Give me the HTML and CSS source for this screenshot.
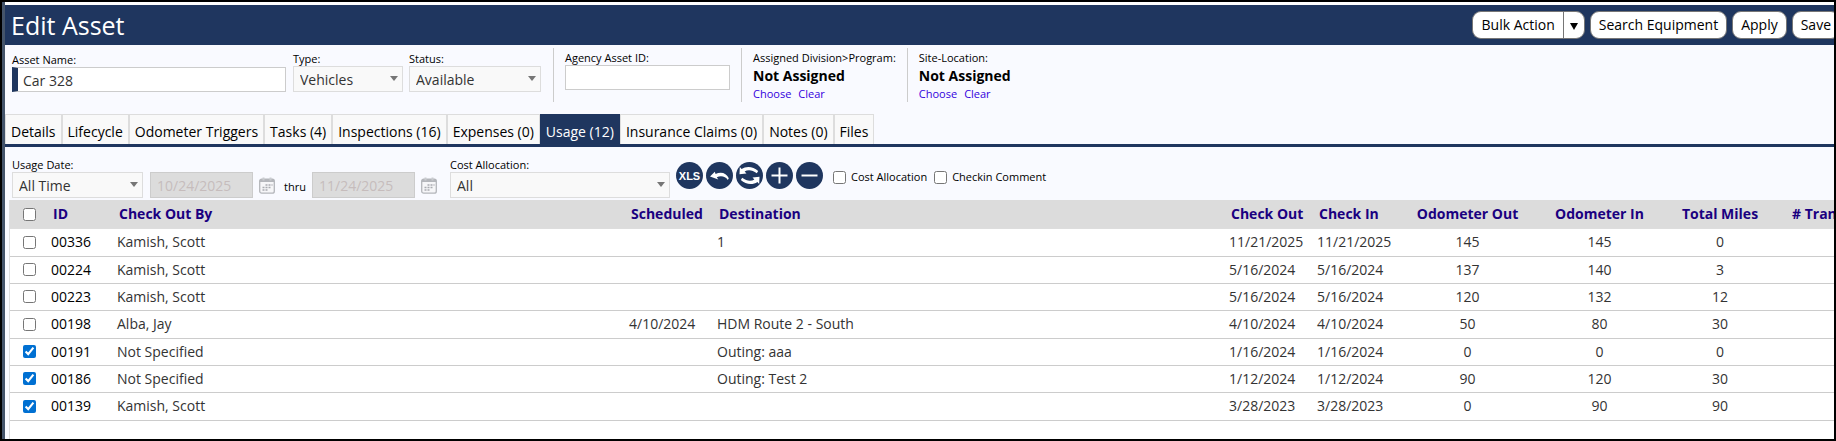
FILE: index.html
```html
<!DOCTYPE html>
<html lang="en">
<head>
<meta charset="utf-8">
<title>Edit Asset</title>
<link rel="stylesheet" href="styles.css">
</head>
<body>
<div class="window">
  <header class="titlebar">
    <h1 class="title">Edit Asset</h1>
    <div class="actions">
      <div class="split">
        <button class="btn split-main" type="button">Bulk Action</button>
        <button class="btn split-arrow" type="button" aria-label="More bulk actions"><svg width="8" height="7" viewBox="0 0 8 7"><path d="M0 0h8L4 7z"/></svg></button>
      </div>
      <button class="btn" type="button">Search Equipment</button>
      <button class="btn" type="button">Apply</button>
      <button class="btn" type="button">Save</button>
    </div>
  </header>

  <section class="asset">
    <div class="asset-main">
      <div class="field field-name">
        <label class="label" for="name">Asset Name:</label>
        <input class="input required" id="name" type="text" value="Car 328">
      </div>
      <div class="field field-type">
        <label class="label" for="type">Type:</label>
        <div class="select"><select id="type"><option>Vehicles</option></select></div>
      </div>
      <div class="field field-status">
        <label class="label" for="status">Status:</label>
        <div class="select"><select id="status"><option>Available</option></select></div>
      </div>
    </div>
    <div class="asset-cell field-agency">
      <label class="label" for="agency">Agency Asset ID:</label>
      <input class="input" id="agency" type="text">
    </div>
    <div class="asset-cell">
      <span class="label">Assigned Division&gt;Program:</span>
      <strong class="value">Not Assigned</strong>
      <div class="links"><a href="#">Choose</a><a href="#">Clear</a></div>
    </div>
    <div class="asset-cell">
      <span class="label">Site-Location:</span>
      <strong class="value">Not Assigned</strong>
      <div class="links"><a href="#">Choose</a><a href="#">Clear</a></div>
    </div>
  </section>

  <nav class="tabs">
    <a class="tab" href="#">Details</a>
    <a class="tab" href="#">Lifecycle</a>
    <a class="tab" href="#">Odometer Triggers</a>
    <a class="tab" href="#">Tasks (4)</a>
    <a class="tab" href="#">Inspections (16)</a>
    <a class="tab" href="#">Expenses (0)</a>
    <a class="tab active" href="#">Usage (12)</a>
    <a class="tab" href="#">Insurance Claims (0)</a>
    <a class="tab" href="#">Notes (0)</a>
    <a class="tab" href="#">Files</a>
  </nav>

  <section class="filters">
    <div class="field field-date">
      <label class="label" for="range">Usage Date:</label>
      <div class="select"><select id="range"><option>All Time</option></select></div>
    </div>
    <div class="dates">
      <input class="input date" type="text" value="10/24/2025" aria-label="From date" disabled>
      <svg class="calendar" width="16" height="17" viewBox="0 0 16 17"><use href="#cal"/></svg>
      <span class="thru">thru</span>
      <input class="input date" type="text" value="11/24/2025" aria-label="To date" disabled>
      <svg class="calendar" width="16" height="17" viewBox="0 0 16 17"><use href="#cal"/></svg>
    </div>
    <div class="field field-cost">
      <label class="label" for="cost">Cost Allocation:</label>
      <div class="select"><select id="cost"><option>All</option></select></div>
    </div>
    <div class="tools">
      <button class="tool" type="button" aria-label="Export to Excel">
        <svg viewBox="0 0 27 27"><circle cx="13.5" cy="13.5" r="13.5"/><text x="13.5" y="17.5" text-anchor="middle">XLS</text></svg>
      </button>
      <button class="tool" type="button" aria-label="Undo">
        <svg viewBox="0 0 27 27"><circle cx="13.5" cy="13.5" r="13.5"/><path class="fill" d="M4 14.500L8.800 9.800 9.600 12C14.500 9.300 20.500 10.500 22.800 16.300L21.800 18C19.500 14.300 15 13.500 10.800 15.200L12.300 17.500z"/></svg>
      </button>
      <button class="tool" type="button" aria-label="Refresh">
        <svg viewBox="0 0 27 27"><circle cx="13.500" cy="13.500" r="13.500"/><path class="fill" d="M3.800 5L5.600 7C10 3.900 17 4 22.200 9L20.800 11.200C16.500 7.800 12 7.300 8.600 9.400L10.500 11.500 3.500 12.300zM23.200 22L21.400 20C17 23.100 10 23 4.800 18L6.200 15.800C10.500 19.200 15 19.700 18.400 17.600L16.500 15.500 23.500 14.700z"/></svg>
      </button>
      <button class="tool" type="button" aria-label="Add">
        <svg viewBox="0 0 27 27"><circle cx="13.5" cy="13.5" r="13.5"/><path class="line" d="M5.500 13.500h16M13.500 5.500v16"/></svg>
      </button>
      <button class="tool" type="button" aria-label="Remove">
        <svg viewBox="0 0 27 27"><circle cx="13.5" cy="13.5" r="13.5"/><path class="line" d="M5.500 13.500h16"/></svg>
      </button>
    </div>
    <div class="checks">
      <label class="check"><input type="checkbox">Cost Allocation</label>
      <label class="check"><input type="checkbox">Checkin Comment</label>
    </div>
  </section>

  <div class="grid-wrap">
    <table class="grid">
      <colgroup>
        <col class="c-check"><col class="c-id"><col><col class="c-day"><col><col class="c-day"><col class="c-day"><col class="c-out"><col class="c-in"><col class="c-miles"><col class="c-trans">
      </colgroup>
      <thead>
        <tr><th><input type="checkbox" aria-label="Select all"></th><th>ID</th><th>Check Out By</th><th>Scheduled</th><th>Destination</th><th>Check Out</th><th>Check In</th><th class="num">Odometer Out</th><th class="num">Odometer In</th><th class="num">Total Miles</th><th class="trans"># Tran</th></tr>
      </thead>
      <tbody>
        <tr><td><input type="checkbox" aria-label="Select 00336"></td><td class="id">00336</td><td>Kamish, Scott</td><td></td><td>1</td><td>11/21/2025</td><td>11/21/2025</td><td class="num">145</td><td class="num">145</td><td class="num">0</td><td></td></tr>
        <tr><td><input type="checkbox" aria-label="Select 00224"></td><td class="id">00224</td><td>Kamish, Scott</td><td></td><td></td><td>5/16/2024</td><td>5/16/2024</td><td class="num">137</td><td class="num">140</td><td class="num">3</td><td></td></tr>
        <tr><td><input type="checkbox" aria-label="Select 00223"></td><td class="id">00223</td><td>Kamish, Scott</td><td></td><td></td><td>5/16/2024</td><td>5/16/2024</td><td class="num">120</td><td class="num">132</td><td class="num">12</td><td></td></tr>
        <tr><td><input type="checkbox" aria-label="Select 00198"></td><td class="id">00198</td><td>Alba, Jay</td><td>4/10/2024</td><td>HDM Route 2 - South</td><td>4/10/2024</td><td>4/10/2024</td><td class="num">50</td><td class="num">80</td><td class="num">30</td><td></td></tr>
        <tr><td><input type="checkbox" aria-label="Select 00191" checked></td><td class="id">00191</td><td>Not Specified</td><td></td><td>Outing: aaa</td><td>1/16/2024</td><td>1/16/2024</td><td class="num">0</td><td class="num">0</td><td class="num">0</td><td></td></tr>
        <tr><td><input type="checkbox" aria-label="Select 00186" checked></td><td class="id">00186</td><td>Not Specified</td><td></td><td>Outing: Test 2</td><td>1/12/2024</td><td>1/12/2024</td><td class="num">90</td><td class="num">120</td><td class="num">30</td><td></td></tr>
        <tr><td><input type="checkbox" aria-label="Select 00139" checked></td><td class="id">00139</td><td>Kamish, Scott</td><td></td><td></td><td>3/28/2023</td><td>3/28/2023</td><td class="num">0</td><td class="num">90</td><td class="num">90</td><td></td></tr>
      </tbody>
    </table>
  </div>
</div>

<svg class="defs" width="0" height="0" aria-hidden="true">
  <symbol id="cal" viewBox="0 0 16 17">
    <rect x=".7" y="2.200" width="14.600" height="14" rx="2" fill="#f6f6f8" stroke="#b4b6bb" stroke-width="1.300"/>
    <path d="M.7 5V4a2 2 0 0 1 2-2h10.600a2 2 0 0 1 2 2v1z" fill="#b4b6bb"/>
    <path d="M4.500.5v3M11.500.5v3" stroke="#c9cbd0" stroke-width="2"/>
    <path d="M6.500 8h2M9.500 8h2M12.500 8h1M3.500 10.500h2M6.500 10.500h2M9.500 10.500h2M3.500 13h2M6.500 13h2" stroke="#a9abb0" stroke-width="1.700"/>
  </symbol>
</svg>
</body>
</html>
```

FILE: styles.css
```css
* {
  box-sizing: border-box;
}

body {
  margin: 0;
  background: #000;
  font-family: "Open Sans", "Noto Sans", sans-serif;
  font-size: 14px;
  line-height: 20px;
  color: #000;
}

.window {
  display: flex;
  flex-direction: column;
  min-height: calc(100vh - 4px);
  margin: 2px;
  padding-top: 3px;
  border-left: 3px solid #44546a;
  background: linear-gradient(#fff 3px, #f9faff 3px);
  overflow: hidden;
}

.titlebar {
  display: flex;
  align-items: center;
  justify-content: space-between;
  height: 40px;
  padding-left: 6px;
  background: #1f365f;
  overflow: hidden;
}

.title {
  margin: 0;
  font-size: 25px;
  line-height: 32px;
  font-weight: 400;
  color: #fff;
}

.actions {
  display: flex;
  gap: 5px;
  margin-right: -6px;
}

.btn {
  height: 28px;
  padding: 0 8px;
  border: 1px solid #767676;
  border-radius: 9px;
  background: #fff;
  font: inherit;
  color: #000;
  white-space: nowrap;
}

.split {
  display: flex;
}

.split-main {
  padding-left: 9px;
  border-right: 0;
  border-radius: 9px 0 0 9px;
}

.split-arrow {
  width: 22px;
  padding: 0;
  border-radius: 0 9px 9px 0;
}

.asset {
  display: flex;
  align-items: flex-start;
  height: 69px;
  padding: 3px 0 0 7px;
}

.asset-main {
  display: flex;
  align-items: flex-end;
  height: 44px;
  margin-right: 12px;
}

.label {
  display: block;
  font-size: 11px;
  line-height: 14px;
  white-space: nowrap;
}

.input {
  display: block;
  width: 100%;
  height: 25px;
  padding: 1px 6px 0;
  border: 1px solid #ccc;
  background: #fff;
  font: inherit;
  color: #333;
}

.input.required {
  padding-left: 5px;
  border-left: 6px solid #1f365f;
}

.field-name {
  width: 274px;
  margin-right: 7px;
}

.field-type {
  width: 110px;
  margin-right: 6px;
}

.field-status {
  width: 132px;
}

.field-agency {
  width: 188px;
}

.select {
  position: relative;
}

.select select {
  display: block;
  width: 100%;
  height: 26px;
  padding: 1px 6px 0;
  border: 1px solid #ddd;
  border-radius: 0;
  background: #f9f9f9;
  font: inherit;
  color: #333;
  appearance: none;
}

.select::after {
  content: "";
  position: absolute;
  top: 10px;
  right: 5px;
  border: 4px solid transparent;
  border-top: 5px solid #767676;
  border-bottom: 0;
  pointer-events: none;
}

.asset-cell {
  height: 54px;
  padding: 3px 11px 0;
  border-left: 1px solid #ccc;
}

.value {
  display: block;
  padding-top: 1px;
  line-height: 20px;
}

.links {
  display: flex;
  gap: 7px;
  font-size: 11px;
  line-height: 16px;
}

.links a {
  color: #3300dd;
  text-decoration: none;
}

.tabs {
  display: flex;
  height: 33px;
  border-bottom: 3px solid #1f365f;
}

.tab {
  padding: 7px 5px 0;
  border: 1px solid #ddd;
  border-bottom: 0;
  background: #f9f9f9;
  color: #000;
  text-decoration: none;
  white-space: nowrap;
}

.tab.active {
  border-color: #1f365f;
  background: #1f365f;
  color: #fff;
}

.filters {
  display: flex;
  align-items: flex-end;
  height: 53px;
  padding: 0 0 2px 7px;
}

.field-date {
  width: 131px;
  margin-right: 7px;
}

.dates {
  display: flex;
  align-items: center;
  margin-right: 13px;
}

.input.date {
  width: 103px;
  height: 26px;
  border-color: #ccc;
  background: #dcdcdc;
  color: #c6bcbc;
}

.calendar {
  margin-left: 6px;
}

.thru {
  width: 21px;
  margin: 0 7px 0 9px;
  padding-top: 4px;
  font-size: 11px;
}

.field-cost {
  width: 220px;
  margin-right: 6px;
}

.tools {
  display: flex;
  gap: 3px;
  margin: 0 10px 9px 0;
}

.tool {
  width: 27px;
  height: 27px;
  padding: 0;
  border: 0;
  background: none;
}

.tool svg {
  display: block;
  width: 27px;
  height: 27px;
  fill: #1f365f;
}

.tool text {
  font-family: "Liberation Sans", sans-serif;
  font-size: 11px;
  font-weight: 700;
  fill: #fff;
}

.tool .fill {
  fill: #fff;
}

.tool .line {
  stroke: #fff;
  stroke-width: 2;
}

.checks {
  display: flex;
  gap: 7px;
  margin-bottom: 11px;
}

.check {
  display: flex;
  align-items: center;
  gap: 5px;
  font-size: 11px;
  white-space: nowrap;
}

input[type="checkbox"] {
  display: block;
  width: 13px;
  height: 13px;
  margin: 0;
  accent-color: #0070d2;
}

.grid-wrap {
  flex: 1;
  margin-left: 4px;
  border-left: 1px solid #ddd;
  background: #fff;
}

.grid {
  width: 100%;
  table-layout: fixed;
  border-collapse: collapse;
}

.grid th,
.grid td {
  height: 27px;
  padding: 0 0 0 3px;
  border-bottom: 1px solid #ccc;
  text-align: left;
  color: #333;
  white-space: nowrap;
}

.grid tbody tr:nth-child(3n + 1) td {
  height: 28px;
}

.grid th {
  height: 28px;
  padding-top: 1px;
  padding-left: 5px;
  border-bottom-color: #ddd;
  background: #dcdcdc;
  color: #1a0080;
}

.grid th:first-child,
.grid td:first-child {
  padding-left: 13px;
}

.grid .id {
  color: #000;
}

.grid .num {
  padding-right: 0;
  padding-left: 0;
  text-align: center;
}

.grid .trans {
  padding-left: 18px;
}

.c-check {
  width: 38px;
}

.c-id {
  width: 66px;
}

.c-day {
  width: 88px;
}

.c-out {
  width: 131px;
}

.c-in {
  width: 133px;
}

.c-miles {
  width: 108px;
}

.c-trans {
  width: 60px;
}

.defs {
  position: absolute;
}
```
